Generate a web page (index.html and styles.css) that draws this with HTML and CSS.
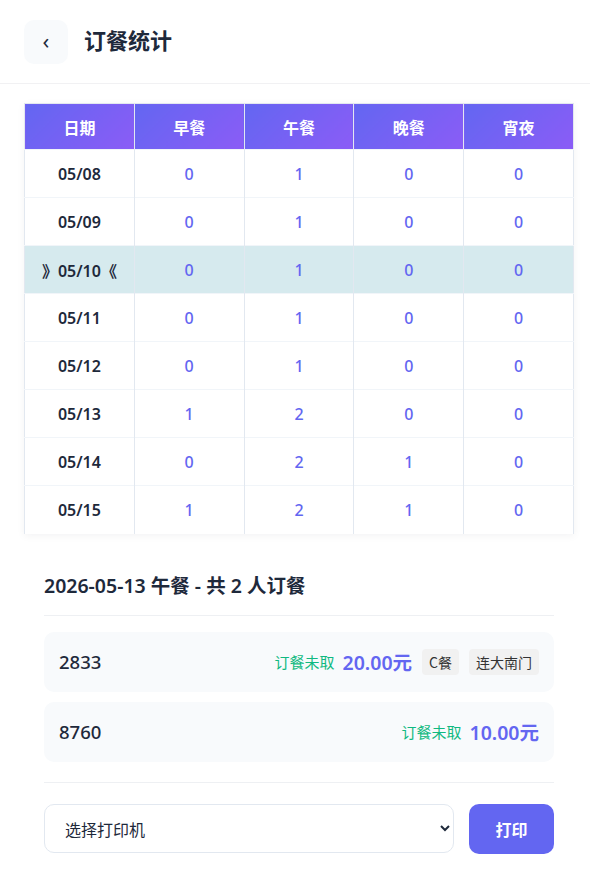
FILE: index.html
```html
<!DOCTYPE html>
<html lang="zh-CN">
<head>
<meta charset="utf-8">
<title>订餐统计</title>
<link rel="stylesheet" href="styles.css">
</head>
<body>
<div class="page">
  <header class="topbar">
    <button class="back" type="button">‹</button>
    <h1 class="title">订餐统计</h1>
  </header>

  <main class="content">
    <div class="table-wrap">
      <table class="stats">
        <thead>
          <tr><th>日期</th><th>早餐</th><th>午餐</th><th>晚餐</th><th>宵夜</th></tr>
        </thead>
        <tbody>
          <tr><td class="date">05/08</td><td>0</td><td>1</td><td>0</td><td>0</td></tr>
          <tr><td class="date">05/09</td><td>0</td><td>1</td><td>0</td><td>0</td></tr>
          <tr class="today"><td class="date">》05/10《</td><td>0</td><td>1</td><td>0</td><td>0</td></tr>
          <tr><td class="date">05/11</td><td>0</td><td>1</td><td>0</td><td>0</td></tr>
          <tr><td class="date">05/12</td><td>0</td><td>1</td><td>0</td><td>0</td></tr>
          <tr><td class="date">05/13</td><td>1</td><td>2</td><td>0</td><td>0</td></tr>
          <tr><td class="date">05/14</td><td>0</td><td>2</td><td>1</td><td>0</td></tr>
          <tr><td class="date">05/15</td><td>1</td><td>2</td><td>1</td><td>0</td></tr>
        </tbody>
      </table>
    </div>

    <section class="detail">
      <h2 class="detail-title">2026-05-13 午餐 - 共 2 人订餐</h2>
      <div class="orders">
        <div class="order">
          <span class="order-no">2833</span>
          <div class="order-meta">
            <span class="status">订餐未取</span>
            <span class="price">20.00元</span>
            <span class="tag">C餐</span>
            <span class="tag">连大南门</span>
          </div>
        </div>
        <div class="order">
          <span class="order-no">8760</span>
          <div class="order-meta">
            <span class="status">订餐未取</span>
            <span class="price">10.00元</span>
          </div>
        </div>
      </div>
      <div class="print-row">
        <select class="printer">
          <option>选择打印机</option>
        </select>
        <button class="print-btn" type="button">打印</button>
      </div>
    </section>
  </main>
</div>
</body>
</html>
```

FILE: styles.css
```css
* { box-sizing: border-box; }

html, body {
  margin: 0;
  padding: 0;
  background: #ffffff;
}

body {
  font-family: "Noto Sans", "Noto Sans CJK SC", sans-serif;
  color: #1e293b;
}

.page {
  width: 590px;
}

.topbar {
  display: flex;
  align-items: center;
  gap: 16px;
  height: 84px;
  padding: 0 24px;
  border-bottom: 1px solid #f1f1f3;
}

.back {
  width: 44px;
  height: 44px;
  border: none;
  border-radius: 10px;
  background: #f8fafc;
  color: #1e293b;
  font-family: "Noto Sans", sans-serif;
  font-size: 22px;
  line-height: 1;
  padding: 0 0 3px 0;
  display: flex;
  align-items: center;
  justify-content: center;
}

.title {
  margin: 0 0 5px 0;
  font-size: 22px;
  font-weight: 700;
  color: #1e293b;
  font-family: "Noto Sans CJK SC", sans-serif;
}

.content {
  padding: 19px 16px 0 24px;
}

.table-wrap {
  box-shadow: 0 2px 8px rgba(15, 23, 42, 0.05);
}

.stats {
  width: 550px;
  border-collapse: collapse;
  table-layout: fixed;
  border: 1px solid #e2e8f0;
  border-bottom: none;
}

.stats th {
  height: 46px;
  background: linear-gradient(135deg, #6366f1 0%, #8b5cf6 100%);
  color: #ffffff;
  font-family: "Noto Sans CJK SC", sans-serif;
  font-size: 16px;
  font-weight: 700;
  border-left: 1px solid #e2e8f0;
  padding: 0;
}

.stats th:first-child { border-left: none; }

.stats td {
  height: 48px;
  text-align: center;
  font-size: 16px;
  font-weight: 500;
  color: #6366f1;
  border-left: 1px solid #e2e8f0;
  border-top: 1px solid #f1f5f9;
  padding: 0;
}

.stats td:first-child { border-left: none; }

.stats td.date {
  color: #1e293b;
  font-weight: 600;
}

.stats tr.today td {
  background: #d6eaee;
}

.detail {
  padding: 38px 20px 0 20px;
}

.detail-title {
  margin: 0;
  font-size: 19.5px;
  font-weight: 600;
  line-height: 28px;
  padding-bottom: 15px;
  border-bottom: 1px solid #eef0f3;
  color: #1e293b;
}

.orders {
  display: flex;
  flex-direction: column;
  gap: 10px;
  padding: 16px 0 20px 0;
  border-bottom: 1px solid #eef0f3;
}

.order {
  height: 60px;
  background: #f8fafc;
  border-radius: 10px;
  display: flex;
  align-items: center;
  justify-content: space-between;
  padding: 0 15px;
}

.order-no {
  font-size: 18.5px;
  font-weight: 500;
  color: #1e293b;
}

.order-meta {
  display: flex;
  align-items: center;
  gap: 10px;
}

.status {
  font-family: "Noto Sans CJK SC", sans-serif;
  font-size: 15px;
  color: #10b981;
}

.price {
  font-size: 19.5px;
  font-weight: 600;
  color: #6366f1;
  margin-left: -2px;
}

.tag {
  height: 26px;
  padding: 0 7px;
  border-radius: 4px;
  background: #f1f1f1;
  color: #333333;
  font-family: "Noto Sans CJK SC", sans-serif;
  font-size: 14px;
  display: flex;
  align-items: center;
}

.print-row {
  display: flex;
  align-items: center;
  gap: 15px;
  padding-top: 21px;
}

.printer {
  flex: 1;
  height: 49px;
  border: 1px solid #e2e8f0;
  border-radius: 10px;
  background: #ffffff;
  padding: 0 12px 0 16px;
  font-family: "Noto Sans CJK SC", sans-serif;
  font-size: 16px;
  color: #1e293b;
}

.print-btn {
  width: 85px;
  height: 50px;
  border: none;
  border-radius: 10px;
  background: #6366f1;
  color: #ffffff;
  font-family: "Noto Sans CJK SC", sans-serif;
  font-size: 16px;
  font-weight: 700;
}
```
